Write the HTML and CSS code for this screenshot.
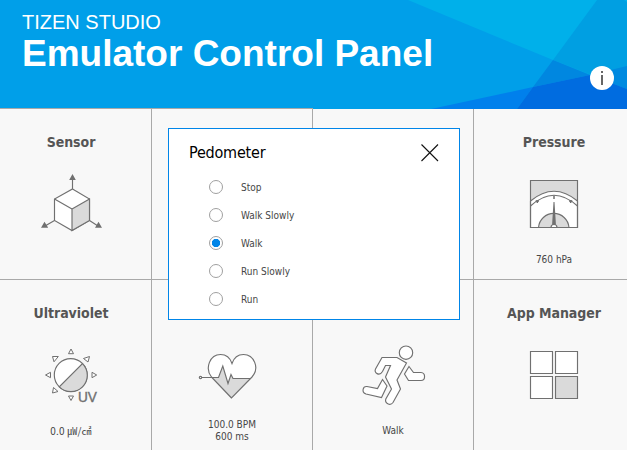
FILE: index.html
```html
<!DOCTYPE html>
<html lang="en">
<head>
<meta charset="utf-8">
<title>Emulator Control Panel</title>
<link rel="stylesheet" href="styles.css">
</head>
<body>
<header class="banner">
  <svg class="facets" viewBox="0 0 627 109" aria-hidden="true">
    <path d="M408 0H627V89L553 60Z" fill="#00b0ea"/>
    <path d="M597 0H627V89L553 60Z" fill="#009fe2"/>
    <path d="M553 60L590 75L533 87Z" fill="#0087e0"/>
    <path d="M627 66L590 75L627 89Z" fill="#008ae0"/>
    <path d="M431 109L533 87L517 109Z" fill="#0080ec"/>
    <path d="M517 109L533 87L590 75L627 89V109Z" fill="#006ce0"/>
    <path d="M624 0H627V2Z" fill="#00b0ea"/>
  </svg>
  <div class="brand">TIZEN STUDIO</div>
  <h1>Emulator Control Panel</h1>
  <button class="info" aria-label="Information"><svg viewBox="0 0 24 24"><path d="M11 5h2v2h-2zM11 9h2v10h-2z" fill="#666"/></svg></button>
</header>
<main class="grid">
  <section class="cell">
    <h2>Sensor</h2>
    <svg class="icon" viewBox="31 169 80 70">
      <path d="M72.5 189L89.5 199V220.500L72 230.500L54.500 220.500V199Z" fill="#fff"/>
      <path d="M72 209L89.500 199V220.500L72 230.500Z" fill="#dadada"/>
      <path d="M54.500 199L72 209M72.500 189V178M54.500 220.500L45 226M89.500 220.500L98 226"/>
      <path class="solid" d="M72.500 174L75.800 180H69.200ZM41 227.800L44.500 221.800L48.200 227.800ZM102 227.800L98.500 221.800L95 227.800Z"/>
    </svg>
  </section>
  <section class="cell"></section>
  <section class="cell"></section>
  <section class="cell">
    <h2>Pressure</h2>
    <svg class="icon" viewBox="514 169 80 70">
      <path d="M530.500 180.500H577.500V227.500H530.500Z" fill="#dadada" stroke="none"/>
      <path d="M530.500 201Q554 181.500 577.500 201V227.500H530.500Z" fill="#fff"/>
      <path d="M530.500 206Q554 184.500 577.500 206"/>
      <path d="M538.500 227.500A15.300 15.300 0 0 1 569 227.500" fill="#dadada"/>
      <path d="M554 195.500V199M535.700 201H539M537.300 200V203M569 201H572.300M570.700 200V203" stroke-width="1.500"/>
      <path class="solid" d="M553.500 202H554.500L556 226H552Z"/>
      <path d="M551 227.500A3 3 0 0 1 557 227.500" fill="#fff"/>
      <path d="M530.500 180.500H577.500V227.500H530.500Z"/>
    </svg>
    <p>760 hPa</p>
  </section>
  <section class="cell">
    <h2>Ultraviolet</h2>
    <svg class="icon" viewBox="31 340 80 70">
      <circle cx="70.700" cy="375" r="16.400" fill="#fff"/>
      <path d="M82.500 363.600A16.400 16.400 0 0 1 59.300 386.800Z" fill="#dadada"/>
      <path class="small" d="M71 349L73.500 353.700H68.500ZM71 400.500L68.500 396H73.500ZM45.500 375L50.500 372.300V377.700ZM96.700 375L92 372.300V377.700ZM52.500 356.500H58.300L54 361.800ZM89.500 356.500L83.500 358.500L88 362ZM52.500 393L53.500 387.500L58 391.500Z"/>
      <text class="uv" x="78" y="402" textLength="19" lengthAdjust="spacingAndGlyphs">UV</text>
    </svg>
    <p><span class="unit">0.0 ㎼/㎠</span></p>
  </section>
  <section class="cell">
    <svg class="icon heart" viewBox="192 340 80 70">
      <path d="M231.500 398L211.500 377C204.500 368 210 354.500 220.500 354.500C226 354.500 230 357.500 232 363.500C234 357.500 238 354.500 243.500 354.500C254 354.500 260 368 252 377Z" fill="#fff" stroke="none"/>
      <path d="M213 377.500H218.500L222.800 366L228 383.500L231 374.500L233 378.500H250.500L231.500 398Z" fill="#dadada" stroke="none"/>
      <path d="M231.500 398L211.500 377C204.500 368 210 354.500 220.500 354.500C226 354.500 230 357.500 232 363.500C234 357.500 238 354.500 243.500 354.500C254 354.500 260 368 252 377Z"/>
      <path d="M202 377.500H218.500L222.800 366L228 383.500L231 374.500L233 378.500H250.500"/>
      <circle cx="200.500" cy="377.500" r="1.200" fill="#fff"/>
    </svg>
    <p class="double">100.0 BPM<br>600 ms</p>
  </section>
  <section class="cell">
    <svg class="icon heart" viewBox="353 340 80 70">
      <g fill="#fff">
      <circle cx="406" cy="352.700" r="6.700"/>
      <path d="M382 357.500H397L406.500 363L397 380L400.500 389L393 402.500C390 406.500 384.500 403 385.800 399L391.500 389L385.500 377L390.500 365.500H385.500L382.500 371.500C379.500 376.500 373.500 373 375.500 369Z"/>
      <path d="M409 366.500L413.500 372.500H421C426 373 425.500 380.500 421 380.500H408.500L404.500 374Z"/>
      <path d="M382.500 379.500L387 386L381.500 397.500L366 394C361 392 363 386 367 386.500L377.500 388.500Z"/>
      </g>
    </svg>
    <p>Walk</p>
  </section>
  <section class="cell">
    <h2>App Manager</h2>
    <svg class="icon" viewBox="514 340 80 70">
      <path d="M530.500 351.500h22v22h-22zM555.500 351.500h22v22h-22zM530.500 376.500h22v22h-22z" fill="#fff"/>
      <path d="M555.500 376.500h22v22h-22z" fill="#dadada"/>
    </svg>
  </section>
</main>
<div class="dialog" role="dialog" aria-label="Pedometer">
  <div class="dialog-head">
    <h3>Pedometer</h3>
    <svg class="close" viewBox="0 0 18 18"><path d="M.5 .5L17 17M17 .5L.5 17" stroke="#111" stroke-width="1.100" fill="none"/></svg>
  </div>
  <div class="options">
    <label><input type="radio" name="mode"><span>Stop</span></label>
    <label><input type="radio" name="mode"><span>Walk Slowly</span></label>
    <label><input type="radio" name="mode" checked><span>Walk</span></label>
    <label><input type="radio" name="mode"><span>Run Slowly</span></label>
    <label><input type="radio" name="mode"><span>Run</span></label>
  </div>
</div>
</body>
</html>
```
FILE: styles.css
```css
* { box-sizing: border-box; margin: 0; padding: 0; }
body {
  position: relative;
  width: 627px;
  height: 450px;
  overflow: hidden;
  background: #f8f8f8;
  font-family: "DejaVu Sans Condensed", "DejaVu Sans", sans-serif;
  font-stretch: condensed;
  color: #464646;
}
.banner {
  position: relative;
  height: 109px;
  padding: 11px 0 0 22px;
  background: #009fe9;
  color: #fff;
  font-family: "Liberation Sans", Arial, sans-serif;
}
.banner::after {
  content: "";
  position: absolute;
  left: 0;
  bottom: 0;
  width: 313px;
  height: 1px;
  background: #a9a9a9;
}
.facets { position: absolute; inset: 0; width: 627px; height: 109px; }
.brand { position: relative; font-size: 20px; line-height: 22px; }
h1 { position: relative; font-size: 37px; line-height: 42px; white-space: nowrap; }
.info {
  position: absolute;
  left: 590px;
  top: 66px;
  width: 24px;
  height: 24px;
  border: 0;
  border-radius: 50%;
  background: #fff;
}
.info svg { display: block; width: 24px; height: 24px; }
.grid {
  display: grid;
  grid-template-columns: repeat(4, 161px);
  grid-template-rows: repeat(2, 171px);
  margin-left: -9px;
}
.cell {
  display: flex;
  flex-direction: column;
  align-items: center;
  border-right: 1px solid #a9a9a9;
  border-bottom: 1px solid #a9a9a9;
  padding-top: 23px;
}
h2 { font-size: 14px; line-height: 20px; letter-spacing: -0.05px; color: #555; white-space: nowrap; }
.icon {
  width: 80px;
  height: 70px;
  margin-top: 17px;
  fill: none;
  stroke: #707070;
  stroke-width: 1.15;
  flex: none;
}
.icon.heart { margin-top: 37px; }
.solid { fill: #707070; stroke: none; }
.small { fill: #fff; stroke-width: 1; }
.uv { fill: #707070; stroke: #707070; stroke-width: 0.4; font: 15px "Liberation Sans", sans-serif; }
.cell p {
  margin-top: 15px;
  font-size: 10px;
  line-height: 12px;
  text-align: center;
  white-space: nowrap;
}
.cell p.double { margin-top: 9px; }
.unit { font-family: "Noto Sans CJK KR", sans-serif; letter-spacing: 0.2px; }
.dialog {
  position: absolute;
  left: 168px;
  top: 128px;
  width: 292px;
  height: 192px;
  border: 1px solid #0085e8;
  background: #fff;
}
.dialog-head { display: flex; justify-content: space-between; padding: 14px 20px 0; }
h3 { font-size: 16px; font-weight: 400; line-height: 20px; color: #000; letter-spacing: -0.2px; }
.close { width: 18px; height: 18px; margin-top: 1px; }
.options { padding: 10px 0 0 40px; }
.options label { display: flex; align-items: center; height: 28px; font-size: 10px; }
.options span { margin-left: 18px; }
.options input {
  appearance: none;
  width: 14px;
  height: 14px;
  border: 1px solid #a0a0a0;
  border-radius: 50%;
}
.options input:checked { background: radial-gradient(circle, #0085e8 3.800px, #fff 4.500px); }
```
